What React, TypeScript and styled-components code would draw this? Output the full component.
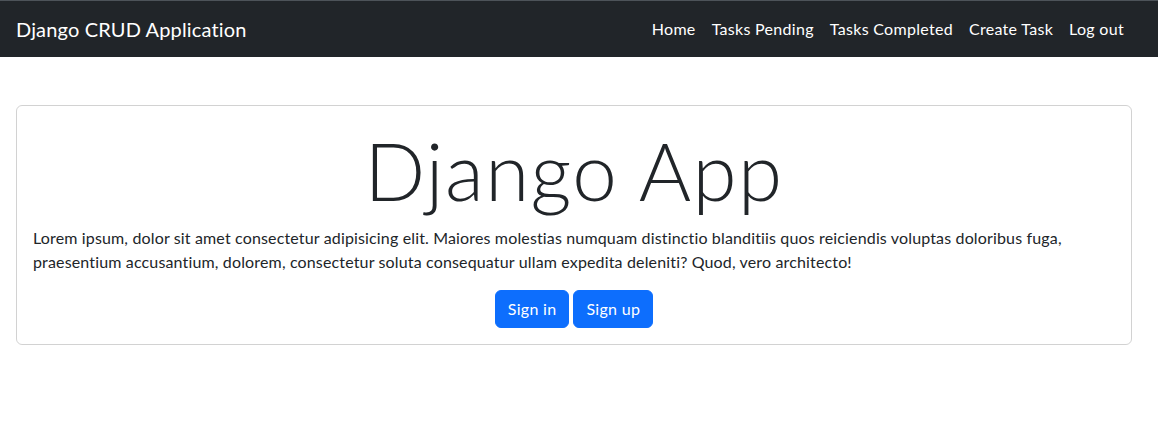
import React from "react";
import styled, { createGlobalStyle } from "styled-components";

const Global = createGlobalStyle`
  * { box-sizing: border-box; }
  body {
    margin: 0;
    background: #fff;
    color: #212529;
    font-family: Lato, "Noto Sans", sans-serif;
    font-size: 16px;
    line-height: 1.5;
  }
`;

const Navbar = styled.nav`
  background: #212529;
  border-top: 1px solid #4d5359;
  height: 57px;
  display: flex;
  align-items: center;
  justify-content: space-between;
  padding: 0 26px 0 16px;
`;

const Brand = styled.a`
  color: #fff;
  font-size: 20px;
  letter-spacing: 0.15px;
  text-decoration: none;
  line-height: 30px;
`;

const NavList = styled.ul`
  list-style: none;
  display: flex;
  margin: 0;
  padding: 0;
`;

const NavLink = styled.a`
  display: block;
  color: #fff;
  text-decoration: none;
  padding: 8px;
  font-size: 16px;
  letter-spacing: 0.3px;
`;

const Main = styled.main`
  padding: 48px 26px 0 16px;
`;

const Card = styled.section`
  border: 1px solid rgba(0, 0, 0, 0.175);
  border-radius: 6px;
  padding: 16px;
  text-align: center;
`;

const Display = styled.h1`
  font-size: 80px;
  font-weight: 300;
  line-height: 1.2;
  letter-spacing: 1.4px;
  margin: 0 0 8px;
`;

const Lead = styled.p`
  text-align: left;
  letter-spacing: 0.15px;
  margin: 0 0 16px;
`;

const ButtonRow = styled.div`
  display: flex;
  justify-content: center;
  gap: 4px;
`;

const Button = styled.a`
  display: inline-block;
  background: #0d6efd;
  color: #fff;
  border: 1px solid #0d6efd;
  border-radius: 6px;
  padding: 6px 12px;
  font-size: 16px;
  line-height: 24px;
  letter-spacing: 0.3px;
  text-decoration: none;
`;

const links = ["Home", "Tasks Pending", "Tasks Completed", "Create Task", "Log out"];

export default function App() {
  return (
    <>
      <Global />
      <Navbar>
        <Brand href="#">Django CRUD Application</Brand>
        <NavList>
          {links.map((l) => (
            <li key={l}>
              <NavLink href="#">{l}</NavLink>
            </li>
          ))}
        </NavList>
      </Navbar>
      <Main>
        <Card>
          <Display>Django App</Display>
          <Lead>
            Lorem ipsum, dolor sit amet consectetur adipisicing elit. Maiores molestias numquam distinctio
            blanditiis quos reiciendis voluptas doloribus fuga, praesentium accusantium, dolorem, consectetur
            soluta consequatur ullam expedita deleniti? Quod, vero architecto!
          </Lead>
          <ButtonRow>
            <Button href="#">Sign in</Button>
            <Button href="#">Sign up</Button>
          </ButtonRow>
        </Card>
      </Main>
    </>
  );
}
